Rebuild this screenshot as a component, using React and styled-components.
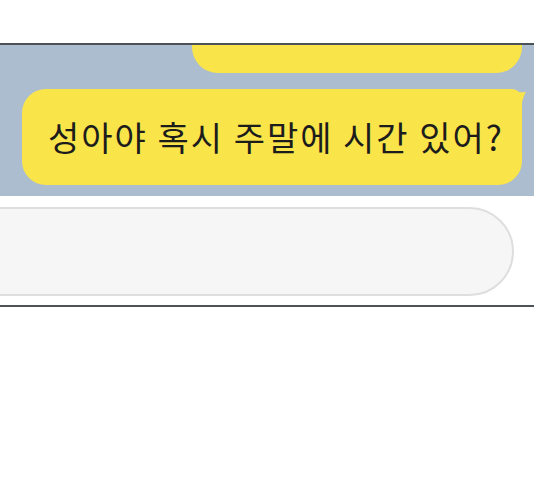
import React from 'react'
import styled, { createGlobalStyle } from 'styled-components'

const Global = createGlobalStyle`
  html, body {
    margin: 0;
    padding: 0;
    background: #fff;
  }
  body {
    font-family: 'Noto Sans CJK KR', 'Noto Sans', sans-serif;
  }
`

function App() {
  return (
    <Page>
      <Global />
      <TopSpace />
      <ChatArea>
        <Bubble width="330px" height="120px" />
        <Bubble width="500px" height="96px" tail>
          <BubbleText>성아야 혹시 주말에 시간 있어?</BubbleText>
          <Tail viewBox="0 0 24 22" width="24" height="22">
            <path d="M0 0 Q 14 2 22 1 Q 18 6 17 21 L 0 21 Z" fill="#f9e44a" />
          </Tail>
        </Bubble>
      </ChatArea>
      <InputRow>
        <InputPill />
      </InputRow>
    </Page>
  )
}

const Page = styled.div`
  width: 534px;
  height: 480px;
  display: flex;
  flex-direction: column;
  overflow: hidden;
`

const TopSpace = styled.div`
  height: 43px;
  flex-shrink: 0;
`

const ChatArea = styled.div`
  height: 153px;
  box-sizing: border-box;
  flex-shrink: 0;
  border-top: 2px solid #4d5257;
  background: #abbdce;
  display: flex;
  flex-direction: column;
  justify-content: flex-end;
  align-items: flex-end;
  gap: 16px;
  padding: 0 12px 11px 0;
  overflow: hidden;
`

const Bubble = styled.div`
  position: relative;
  flex-shrink: 0;
  width: ${p => p.width};
  height: ${p => p.height};
  background: #f9e44a;
  border-radius: ${p => (p.tail ? '24px 10px 24px 24px' : '26px')};
  display: flex;
  align-items: center;
  padding-left: 26px;
  box-sizing: border-box;
`

const BubbleText = styled.span`
  font-size: 34px;
  color: #1c1c1c;
  letter-spacing: 2px;
  white-space: nowrap;
  margin-top: -2px;
`

const Tail = styled.svg`
  position: absolute;
  top: 2px;
  right: -6px;
`

const InputRow = styled.div`
  background: #fff;
  padding: 11px 20px 9px 0;
  border-bottom: 2px solid #4d5257;
  display: flex;
`

const InputPill = styled.div`
  flex: 1;
  height: 89px;
  margin-left: -60px;
  box-sizing: border-box;
  background: #f6f6f6;
  border: 2px solid #dedede;
  border-radius: 45px;
`

export default App
